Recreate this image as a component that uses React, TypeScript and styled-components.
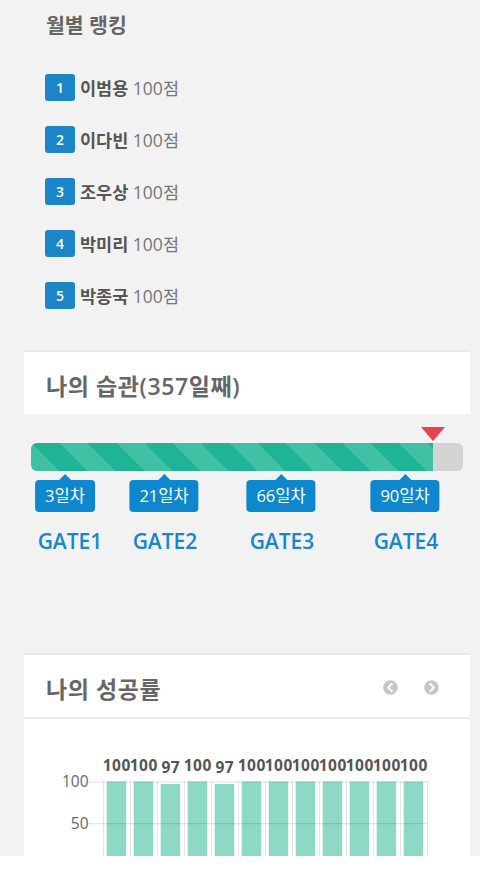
import React from "react";
import styled, { createGlobalStyle } from "styled-components";
import { FaChevronCircleLeft, FaChevronCircleRight } from "react-icons/fa";

const GlobalStyle = createGlobalStyle`
  html {
    background: #fff;
  }
  body {
    margin: 0;
    font-family: "Open Sans", "Noto Sans CJK KR", sans-serif;
  }
`;

const Page = styled.div`
  height: 856px;
  overflow: hidden;
  background: #f2f2f2;
`;

const RankingSection = styled.section`
  padding: 10px 0 0 45px;
`;

const SectionTitle = styled.h2`
  margin: 0;
  padding-left: 1px;
  font-size: 20.5px;
  line-height: 30px;
  font-weight: 600;
  color: #666;
`;

const RankList = styled.ul`
  list-style: none;
  margin: 21px 0 0;
  padding: 0;
`;

const RankRow = styled.li`
  display: flex;
  align-items: center;
  gap: 5px;
  height: 52px;
  font-size: 17.5px;
`;

const RankBadge = styled.span`
  display: flex;
  align-items: center;
  justify-content: center;
  width: 30px;
  height: 27px;
  border-radius: 3px;
  background: #1c85c8;
  color: #fff;
  font-size: 14px;
  font-weight: 600;
`;

const Name = styled.b`
  color: #555;
  font-weight: 600;
`;

const Score = styled.span`
  color: #777;
`;

const Card = styled.section<{ $top: number }>`
  margin: ${(p) => p.$top}px 10px 0 24px;
`;

const CardHeader = styled.header<{ $divider?: boolean }>`
  display: flex;
  align-items: center;
  justify-content: space-between;
  height: 59px;
  padding: 3px 31px 0 22px;
  background: #fff;
  border-top: 2px solid #e9e9e9;
  border-bottom: ${(p) => (p.$divider ? "2px solid #ebebeb" : "none")};
`;

const CardTitle = styled.h3`
  margin: 0;
  font-size: 23px;
  letter-spacing: 0.6px;
  font-weight: 600;
  color: #666;
`;

const Nav = styled.div`
  display: flex;
  gap: 26px;
  color: #c6c6c6;
`;

const HabitBody = styled.div`
  padding: 29px 17px 0 31px;
`;

const Track = styled.div`
  position: relative;
  height: 28px;
  border-radius: 6px;
  background: #d4d4d4;
`;

const Fill = styled.div`
  height: 100%;
  border-radius: 6px 0 0 6px;
  background: repeating-linear-gradient(
    45deg,
    #40c0a5 0 20px,
    #1eb495 20px 40px
  );
`;

const Marker = styled.span`
  position: absolute;
  top: -16px;
  width: 0;
  height: 0;
  border-left: 12px solid transparent;
  border-right: 12px solid transparent;
  border-top: 14px solid #e8414f;
  transform: translateX(-50%);
`;

const GateArea = styled.div`
  position: relative;
  height: 86px;
`;

const GateTip = styled.span`
  position: absolute;
  top: 9px;
  transform: translateX(-50%);
  height: 32px;
  padding: 0 10px;
  border-radius: 4px;
  background: #0d87cd;
  color: #fff;
  font-size: 16.5px;
  line-height: 32px;
  white-space: nowrap;

  &::before {
    content: "";
    position: absolute;
    top: -6px;
    left: 50%;
    margin-left: -6px;
    border-left: 6px solid transparent;
    border-right: 6px solid transparent;
    border-bottom: 6px solid #0d87cd;
  }
`;

const GateLabel = styled.span`
  position: absolute;
  top: 58px;
  transform: translateX(-50%);
  font-size: 21px;
  line-height: 24px;
  font-weight: 600;
  color: #1787cc;
  white-space: nowrap;
`;

const ChartBody = styled.div`
  height: 160px;
  background: #fff;
`;

const ranking = [
  { name: "이범용", score: 100 },
  { name: "이다빈", score: 100 },
  { name: "조우상", score: 100 },
  { name: "박미리", score: 100 },
  { name: "박종국", score: 100 },
];

const gates = [
  { day: 3, tip: 34, label: 39 },
  { day: 21, tip: 133, label: 134 },
  { day: 66, tip: 250, label: 251 },
  { day: 90, tip: 374, label: 375 },
];

const rates = [100, 100, 97, 100, 97, 100, 100, 100, 100, 100, 100, 100];

const TRACK_WIDTH = 432;
const FILL_WIDTH = 402;

// chart geometry (svg coords, origin at card's left edge / body top)
const X0 = 79;
const STEP = 27;
const ZERO_Y = 146;
const UNIT = 0.835;

const RateChart: React.FC = () => (
  <svg width="446" height="160" fontFamily="Open Sans, sans-serif">
    {rates.map((_, i) => (
      <line key={"v" + i} x1={X0 + i * STEP + 0.5} x2={X0 + i * STEP + 0.5} y1={62} y2={160} stroke="#e6e6e6" />
    ))}
    <line x1={X0 + 12 * STEP + 0.5} x2={X0 + 12 * STEP + 0.5} y1={62} y2={160} stroke="#e6e6e6" />
    {rates.map((v, i) => (
      <rect
        key={"b" + i}
        x={X0 + i * STEP + 3.7}
        y={ZERO_Y - v * UNIT}
        width={19.5}
        height={160}
        fill="#8dd9c6"
      />
    ))}
    {[100, 50].map((v) => (
      <g key={v}>
        <line x1={64} x2={404} y1={ZERO_Y - v * UNIT + 0.5} y2={ZERO_Y - v * UNIT + 0.5} stroke="#000" strokeOpacity={0.12} />
        <text x={64.5} y={ZERO_Y - v * UNIT + 5.5} textAnchor="end" fontSize={15.5} fill="#666">
          {v}
        </text>
      </g>
    ))}
    {rates.map((v, i) => (
      <text
        key={"t" + i}
        x={X0 + i * STEP + 13.8}
        y={ZERO_Y - v * UNIT - 11}
        textAnchor="middle"
        fontSize={15.5}
        fontWeight={700}
        letterSpacing={0.5}
        fill="#555"
      >
        {v}
      </text>
    ))}
  </svg>
);

const App: React.FC = () => {
  return (
    <Page>
      <GlobalStyle />
      <RankingSection>
        <SectionTitle>월별 랭킹</SectionTitle>
        <RankList>
          {ranking.map((r, i) => (
            <RankRow key={r.name}>
              <RankBadge>{i + 1}</RankBadge>
              <span>
                <Name>{r.name}</Name> <Score>{r.score}점</Score>
              </span>
            </RankRow>
          ))}
        </RankList>
      </RankingSection>

      <Card $top={29}>
        <CardHeader>
          <CardTitle>나의 습관(357일째)</CardTitle>
        </CardHeader>
      </Card>
      <HabitBody>
        <Track>
          <Fill style={{ width: FILL_WIDTH }} />
          <Marker style={{ left: (FILL_WIDTH / TRACK_WIDTH) * 100 + "%" }} />
        </Track>
        <GateArea>
          {gates.map((g, i) => (
            <React.Fragment key={g.day}>
              <GateTip style={{ left: g.tip }}>{g.day}일차</GateTip>
              <GateLabel style={{ left: g.label }}>GATE{i + 1}</GateLabel>
            </React.Fragment>
          ))}
        </GateArea>
      </HabitBody>

      <Card $top={96}>
        <CardHeader $divider>
          <CardTitle>나의 성공률</CardTitle>
          <Nav>
            <FaChevronCircleLeft size={15} />
            <FaChevronCircleRight size={15} />
          </Nav>
        </CardHeader>
        <ChartBody>
          <RateChart />
        </ChartBody>
      </Card>
    </Page>
  );
};

export default App;
